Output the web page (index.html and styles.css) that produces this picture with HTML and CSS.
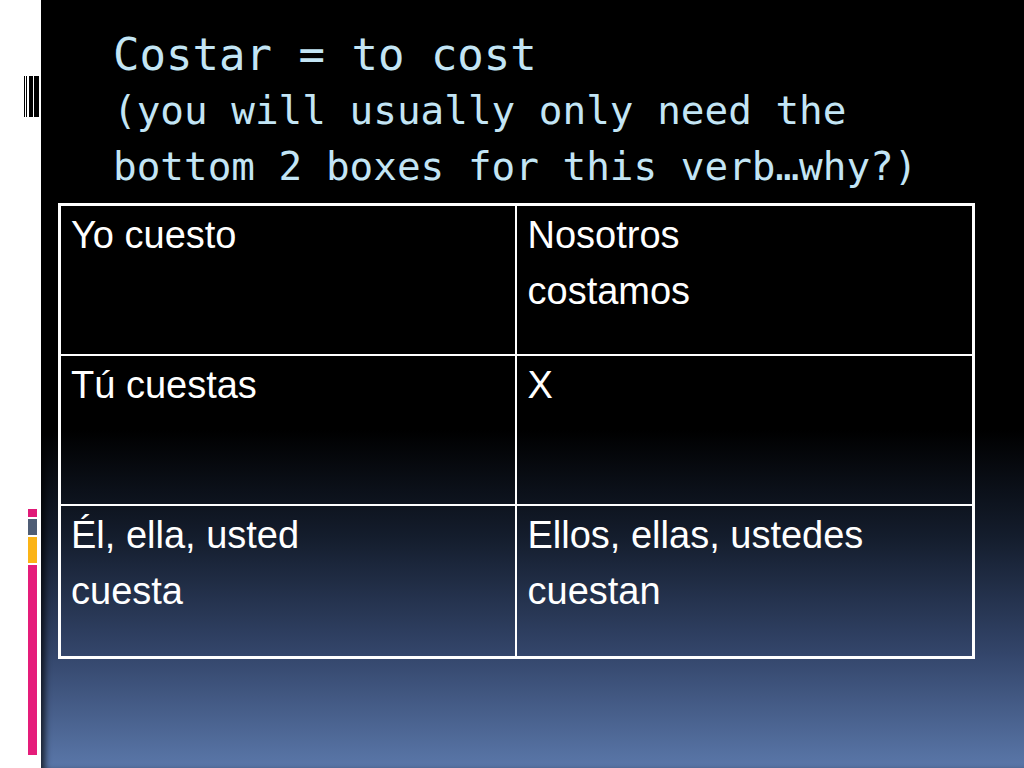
FILE: index.html
```html
<!DOCTYPE html>
<html lang="es">
<head>
<meta charset="utf-8">
<title>Costar = to cost</title>
<link rel="stylesheet" href="styles.css">
</head>
<body>
<div class="slide">
  <aside class="strip">
    <svg class="barcode" width="17" height="41" viewBox="0 0 17 41" aria-hidden="true">
      <rect x="0" y="0" width="1" height="41" fill="#000"/>
      <rect x="2" y="0" width="1" height="41" fill="#000"/>
      <rect x="5" y="0" width="4" height="41" fill="#000"/>
      <rect x="10" y="0" width="5" height="41" fill="#000"/>
    </svg>
    <div class="bars">
      <span class="bar bar-pink-sm"></span>
      <span class="bar bar-gray"></span>
      <span class="bar bar-orange"></span>
      <span class="bar bar-pink"></span>
    </div>
  </aside>
  <main class="content">
    <h1 class="title">
      <span class="title-main">Costar = to cost</span>
      <span class="title-sub">(you will usually only need the<br>bottom 2 boxes for this verb…why?)</span>
    </h1>
    <div class="grid">
      <div class="cell c1 r">Yo cuesto</div>
      <div class="cell r">Nosotros<br>costamos</div>
      <div class="cell c1 r">Tú cuestas</div>
      <div class="cell r">X</div>
      <div class="cell c1">Él, ella, usted<br>cuesta</div>
      <div class="cell">Ellos, ellas, ustedes<br>cuestan</div>
    </div>
  </main>
</div>
</body>
</html>
```

FILE: styles.css
```css
html, body {
  margin: 0;
  padding: 0;
  background: #fff;
}

.slide {
  width: 1024px;
  height: 768px;
  display: flex;
  overflow: hidden;
}

.strip {
  width: 41px;
  flex: 0 0 41px;
  background: #fff;
  display: flex;
  flex-direction: column;
}

.barcode {
  display: block;
  margin: 76px 0 0 24px;
}

.bars {
  margin: 392px 0 0 28px;
  display: flex;
  flex-direction: column;
  gap: 2px;
  width: 9px;
}

.bar {
  display: block;
  width: 9px;
}

.bar-pink-sm { height: 8px; background: #e01a78; }
.bar-gray { height: 16px; background: #4f5d75; }
.bar-orange { height: 26px; background: #fbb417; }
.bar-pink { height: 190px; background: #e51d7a; }

.content {
  flex: 1;
  background: linear-gradient(to bottom, #000 0%, #000 56%, #141d2d 70%, #33456a 85%, #5a77a9 100%);
  box-shadow: inset 7px 0 6px -3px rgba(0, 0, 0, 0.7);
  padding-top: 27px;
}

.title {
  margin: 0 0 8px 72px;
  font-family: "DejaVu Sans Mono", monospace;
  font-weight: normal;
  color: #c3e5f5;
  line-height: 56px;
}

.title-main {
  display: block;
  font-size: 44px;
}

.title-sub {
  display: block;
  font-size: 39.3px;
}

.grid {
  margin-left: 17px;
  width: 917px;
  height: 456px;
  box-sizing: border-box;
  border: 3px solid #fff;
  display: grid;
  grid-template-columns: 1fr 1fr;
  grid-template-rows: 150px 150px 1fr;
}

.cell {
  font-family: "Liberation Sans", Arial, sans-serif;
  font-size: 38px;
  line-height: 56px;
  color: #fff;
  padding: 1px 10px 0 11px;
}

.c1 {
  border-right: 2px solid #fff;
  padding-left: 10px;
}

.r {
  border-bottom: 2px solid #fff;
}
```
